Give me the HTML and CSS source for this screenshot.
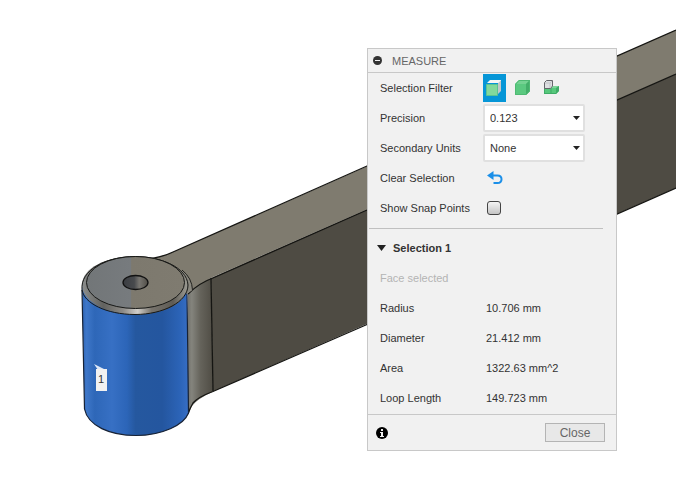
FILE: index.html
```html
<!DOCTYPE html>
<html lang="en">
<head>
<meta charset="utf-8">
<title>Measure</title>
<link rel="stylesheet" href="styles.css">
</head>
<body>
<main class="viewport">
  <svg class="scene" viewBox="0 0 676 502" preserveAspectRatio="xMinYMin slice" role="img" aria-label="Arm with a selected cylinder face">
    <defs>
      <linearGradient id="blue" x1="82" x2="189" y1="0" y2="0" gradientUnits="userSpaceOnUse">
        <stop offset="0" stop-color="#2d62b0"/>
        <stop offset=".04" stop-color="#3e77c9"/>
        <stop offset=".12" stop-color="#2e67b8"/>
        <stop offset=".28" stop-color="#3770c4"/>
        <stop offset=".42" stop-color="#2c65b8"/>
        <stop offset=".5" stop-color="#25589f"/>
        <stop offset=".75" stop-color="#24569f"/>
        <stop offset=".92" stop-color="#2c64b8"/>
        <stop offset="1" stop-color="#386fc6"/>
      </linearGradient>
      <linearGradient id="rim" x1="82" x2="189" y1="0" y2="0" gradientUnits="userSpaceOnUse">
        <stop offset="0" stop-color="#8b8d8c"/>
        <stop offset=".2" stop-color="#62625f"/>
        <stop offset=".38" stop-color="#8b8985"/>
        <stop offset=".52" stop-color="#d0cec9"/>
        <stop offset=".65" stop-color="#77736c"/>
        <stop offset=".85" stop-color="#5e5b54"/>
        <stop offset="1" stop-color="#a4a39b"/>
      </linearGradient>
      <linearGradient id="cap" x1="87" x2="184" y1="0" y2="0" gradientUnits="userSpaceOnUse">
        <stop offset="0" stop-color="#727678"/>
        <stop offset=".45" stop-color="#777b7e"/>
        <stop offset=".46" stop-color="#7d796e"/>
        <stop offset="1" stop-color="#7f7b70"/>
      </linearGradient>
      <linearGradient id="hole" x1="123" x2="148" y1="0" y2="0" gradientUnits="userSpaceOnUse">
        <stop offset="0" stop-color="#3a3d42"/>
        <stop offset=".45" stop-color="#484a4d"/>
        <stop offset=".65" stop-color="#777570"/>
        <stop offset="1" stop-color="#514e47"/>
      </linearGradient>
      <linearGradient id="fillet" x1="188" x2="213" y1="0" y2="0" gradientUnits="userSpaceOnUse">
        <stop offset="0" stop-color="#74736d"/>
        <stop offset=".15" stop-color="#84847d"/>
        <stop offset=".5" stop-color="#65635b"/>
        <stop offset="1" stop-color="#4f4c44"/>
      </linearGradient>
    </defs>
    <path d="M150 259Q165 256 173 252L676 30V74L213 277Q206 280 188 293L135 292Z" fill="#7f7b6f"/>
    <path d="M211 278L676 74V188L213 391.500Z" fill="#4e4b43"/>
    <path d="M188 294Q199 283 211 278L213 391.500Q197 399 192 406L188 414Z" fill="url(#fillet)"/>
    <g fill="none" stroke="#151512" stroke-width="1.300">
      <path d="M150 259Q165 256 173 252L367 166L676 30"/>
      <path d="M188 294Q199 283 213 278L367 210L676 74"/>
      <path d="M188 414Q190 408 193 403Q198 397 213 391.500L367 324.500L676 188"/>
      <path d="M211 278L213 391"/>
    </g>
    <path d="M82 283L84.500 409C88 426 110 435.500 136 435.500S184 425 188.500 413L187 283Z" fill="url(#blue)"/>
    <path d="M82 290L84.500 409C88 426 110 435.500 136 435.500S184 425 188.500 413L187 292" fill="none" stroke="#172235" stroke-width="1.200"/>
    <path d="M182 270Q192 278 192.500 290L187 294L181 290Z" fill="#8a887f"/>
    <path d="M182 270Q192 278 192.500 290" fill="none" stroke="#22221f"/>
    <path d="M82 285C82 268 106 256.500 135 256.500S187 268 187 286S163 314.500 135 314.500S82 302 82 285Z" fill="url(#rim)"/>
    <path d="M82 290C80 270 106 256.500 135 256.500C160 256.500 187 267 188 285C188 302 163 314.500 135 314.500C106 314.500 84 303 82 290" fill="none" stroke="#171816"/>
    <ellipse cx="135.500" cy="282.500" rx="49" ry="26" fill="url(#cap)" stroke="#171816"/>
    <ellipse cx="135.500" cy="282.500" rx="12.500" ry="7" fill="url(#hole)" stroke="#111" stroke-width="1.300"/>
    <path d="M94 364L104 369V370H98Z" fill="#dce7f7"/>
    <path d="M96 369H107V391H96Z" fill="#f1f1f1"/>
    <text class="marker" x="98" y="383">1</text>
  </svg>

  <section class="panel" aria-labelledby="title">
    <header class="panel-head">
      <button class="plain" type="button" aria-label="Collapse">
        <svg width="9" height="9" viewBox="0 0 9 9"><circle cx="4.500" cy="4.500" r="4.500" fill="#333"/><path d="M2 4.500H7" stroke="#f1f1f1"/></svg>
      </button>
      <h1 id="title">MEASURE</h1>
    </header>

    <form class="settings">
      <div class="row">
        <span class="label">Selection Filter</span>
        <div class="filters">
          <button class="filter active" type="button" aria-label="Faces" aria-pressed="true">
            <svg width="16" height="16" viewBox="0 0 16 16"><path d="M1 3L4 0H15L12 3Z" fill="#f6f6f6"/><path d="M12 3L15 0V11L12 14Z" fill="#c3c7ca"/><path d="M12 3L15 0" stroke="#e9eaec"/><path d="M.5 4.500H11.500V15.500H.5Z" fill="#83d99c" stroke="#5cc492"/></svg>
          </button>
          <button class="filter" type="button" aria-label="Bodies">
            <svg width="16" height="16" viewBox="0 0 16 16"><path d="M0 4L4 0H15V11L11 15H0Z" fill="#5bc980"/><path d="M0 4L4 0H15L11 4Z" fill="#75d292"/><path d="M11 4L15 0V11L11 15Z" fill="#43ae69"/><path d="M.5 4.500V14.500H11L14.500 11V.5H4Z" fill="none" stroke="#4fb973"/></svg>
          </button>
          <button class="filter" type="button" aria-label="Components">
            <svg width="16" height="16" viewBox="0 0 16 16"><path d="M0 8H7L9 6H15V11L12 14H0Z" fill="#57c87c"/><path d="M7 8L9 6H15L13 8Z" fill="#7bd698"/><path d="M12 8L15 6V11L12 14Z" fill="#3fac67"/><path d="M7 8V14M0 13.500H12M.5 8V14" fill="none" stroke="#3fac67"/><path d="M.5 2.500L2.500 .5H8.500V6L6.500 8.500H.5Z" fill="#dedfe2" stroke="#66666b"/><path d="M1 3H6V8M6 3L8 1" fill="none" stroke="#c3c4c8"/></svg>
          </button>
        </div>
      </div>
      <div class="row">
        <label class="label" for="precision">Precision</label>
        <div class="select">
          <select id="precision"><option>0.123</option></select>
          <svg class="arrow" width="7" height="4" viewBox="0 0 7 4"><path d="M0 0H7L3.500 4Z" fill="#222"/></svg>
        </div>
      </div>
      <div class="row">
        <label class="label" for="units">Secondary Units</label>
        <div class="select">
          <select id="units"><option>None</option></select>
          <svg class="arrow" width="7" height="4" viewBox="0 0 7 4"><path d="M0 0H7L3.500 4Z" fill="#222"/></svg>
        </div>
      </div>
      <div class="row">
        <label class="label" for="clear">Clear Selection</label>
        <button class="plain inset" id="clear" type="button">
          <svg width="16" height="14" viewBox="0 0 16 14"><path d="M0 4.500L6.500 0V9Z" fill="#1b8fe8"/><path d="M5 4.500H10.500C13 4.500 14.500 6 14.500 8.200S13 12 10.500 12H6.500" fill="none" stroke="#1b8fe8" stroke-width="2"/></svg>
        </button>
      </div>
      <div class="row">
        <label class="label" for="snap">Show Snap Points</label>
        <input class="check" id="snap" type="checkbox">
      </div>
    </form>

    <section class="results">
      <h2>
        <button class="plain toggle" type="button" aria-expanded="true">
          <svg width="9" height="6" viewBox="0 0 9 6"><path d="M0 0H9L4.500 6Z" fill="#222"/></svg>
          Selection 1
        </button>
      </h2>
      <p class="hint">Face selected</p>
      <table>
        <tr><th scope="row">Radius</th><td>10.706 mm</td></tr>
        <tr><th scope="row">Diameter</th><td>21.412 mm</td></tr>
        <tr><th scope="row">Area</th><td>1322.63 mm^2</td></tr>
        <tr><th scope="row">Loop Length</th><td>149.723 mm</td></tr>
      </table>
    </section>

    <footer class="panel-foot">
      <button class="plain" type="button" aria-label="Information">
        <svg width="12" height="12" viewBox="0 0 12 12"><circle cx="6" cy="6" r="6" fill="#000"/><path d="M5 2H7V4H5ZM4 5H7V9H8V10H4V9H5V6H4Z" fill="#f1f1f1"/></svg>
      </button>
      <button class="close" type="button">Close</button>
    </footer>
  </section>
</main>
</body>
</html>
```
FILE: styles.css
```css
* {
  box-sizing: border-box;
}

body {
  margin: 0;
  background: #fff;
  color: #333;
  font: 11px/14px "Liberation Sans", Arial, sans-serif;
}

button,
select {
  font: inherit;
  color: inherit;
}

svg {
  display: block;
}

.viewport {
  position: relative;
  display: flex;
  justify-content: flex-end;
  align-items: flex-start;
  min-height: 100vh;
  padding: 48px 59px 48px 0;
  overflow: hidden;
}

.scene {
  position: absolute;
  inset: 0;
  width: 100%;
  height: 100%;
}

.marker {
  font-size: 11px;
  fill: #333;
}

.panel {
  position: relative;
  flex: 0 1 250px;
  background: #f1f1f1;
  border: 1px solid #c8c8c8;
}

.plain {
  display: flex;
  align-items: center;
  padding: 0;
  border: 0;
  background: none;
}

.panel-head {
  display: flex;
  align-items: center;
  gap: 10px;
  height: 24px;
  padding: 0 5px;
  border-bottom: 1px solid #c8c8c8;
}

h1 {
  margin: 0;
  color: #666;
  font-size: 11px;
  font-weight: 400;
}

.settings {
  margin: 0 13px 0 1px;
  padding: 0 0 5px 11px;
  border-bottom: 1px solid #c0c0c0;
}

.row {
  display: grid;
  grid-template-columns: 103px 1fr;
  align-items: center;
  height: 30px;
}

.filters {
  display: flex;
  gap: 6px;
}

.filter {
  display: flex;
  align-items: center;
  width: 23px;
  height: 28px;
  padding: 0 3px;
  border: 0;
  background: none;
}

.filter.active {
  background: #0696d7;
}

.select {
  position: relative;
  width: 102px;
}

select {
  display: block;
  width: 100%;
  height: 28px;
  padding: 0 16px 0 5px;
  appearance: none;
  background: #fff;
  border: 2px solid #e0e0e0;
  border-radius: 2px;
}

.arrow {
  position: absolute;
  top: 12px;
  right: 5px;
  pointer-events: none;
}

.inset {
  margin-left: 4px;
}

.check {
  width: 14px;
  height: 14px;
  margin: 0 0 0 4px;
  appearance: none;
  background: linear-gradient(#f4f4f4, #c4c4c4);
  border: 1px solid #444;
  border-radius: 3px;
}

.results {
  padding: 4px 12px 1px;
}

h2 {
  margin: 0 -3px;
  font-size: 11px;
  font-weight: 700;
}

.toggle {
  gap: 7px;
  height: 30px;
}

.hint {
  margin: 0;
  color: #b4b4b4;
  line-height: 30px;
}

table {
  width: 100%;
  border-collapse: collapse;
}

th,
td {
  height: 30px;
  padding: 0;
  font-weight: 400;
  text-align: left;
}

th {
  width: 106px;
}

.panel-foot {
  display: flex;
  align-items: center;
  justify-content: space-between;
  height: 36px;
  padding: 0 11px 0 8px;
  border-top: 1px solid #c8c8c8;
}

.close {
  width: 60px;
  height: 19px;
  padding: 0;
  color: #666;
  background: #e8e8e8;
  border: 1px solid #b4b4b4;
  font-size: 12px;
}
```
